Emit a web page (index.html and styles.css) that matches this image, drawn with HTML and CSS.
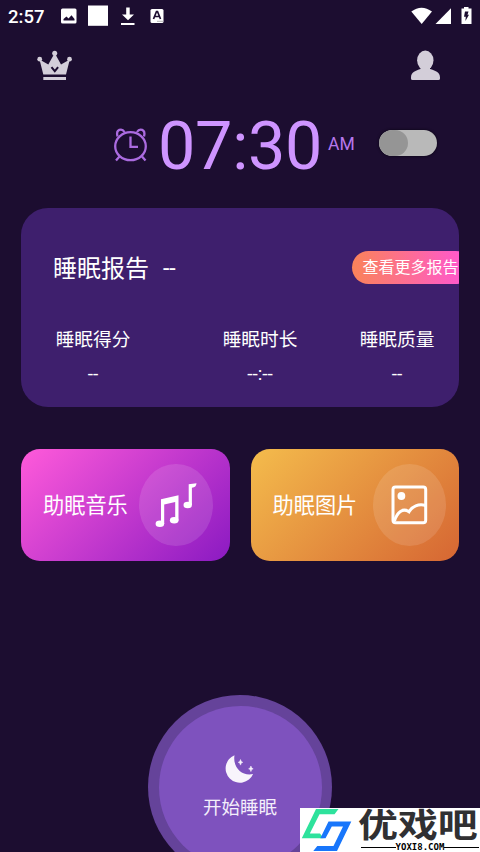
FILE: index.html
```html
<!DOCTYPE html>
<html lang="zh-CN">
<head>
<meta charset="utf-8">
<title>睡眠</title>
<link rel="stylesheet" href="styles.css">
</head>
<body>
<div class="screen">
  <header class="status">
    <span class="status-time">2:57</span>
    <svg class="status-left" viewBox="60 4 106 24" width="106" height="24">
      <rect x="61" y="8.500" width="15.500" height="15" rx="1.500" fill="#fff"/>
      <path d="M63.500 20.500v-1.500l3-2.500 2 2 3-3.200 3 3.700v1.500z" fill="#1c0d30"/>
      <rect x="88" y="5.500" width="20" height="20.300" fill="#fff"/>
      <path d="M126.200 7.500h3.500v7h4.300l-6 5.800-6-5.800h4.200zM121 23h13.500v2H121z" fill="#fff"/>
      <rect x="150.500" y="9" width="13" height="14" rx="1.500" fill="#fff"/>
      <path d="M153.500 19l3-7.500h1l3 7.500M155 16.500h4" fill="none" stroke="#1c0d30" stroke-width="1.700"/>
      <path d="M157.500 21.300h5" stroke="#666" stroke-width="1" stroke-dasharray="1 1"/>
    </svg>
    <svg class="status-right" viewBox="410 4 64 24" width="64" height="24">
      <path d="M411.300 11.500Q421.500 3.800 432 11.500L421.700 24z" fill="#fff"/>
      <path d="M451 8.300V24h-15.500z" fill="#fff"/>
      <path d="M464 7h4.500v1.500h3V24h-10V8.500h2.500z" fill="#fff"/>
      <path d="M465 11.500h3.500l-1 3.300h1.500l-3.600 6.200.4-4.300h-1.800z" fill="#1c0d30"/>
    </svg>
  </header>

  <nav class="topbar">
    <svg viewBox="37 50 36 31" width="36" height="31">
      <path d="M43.300 74.500L39.500 59.500 48.300 64.500 54.700 53 61 64.500 69.800 59.500 66 74.500z" fill="#d3ced9"/>
      <g fill="#d3ced9"><circle cx="39.700" cy="59.200" r="2.400"/><circle cx="54.700" cy="53.200" r="2.500"/><circle cx="69.500" cy="59.200" r="2.400"/><path d="M43.300 77h22.700v3H43.300z"/></g>
      <path d="M51.500 67.200l3.300 4 3.300-4" fill="none" stroke="#1c0d30" stroke-width="2"/>
    </svg>
    <svg viewBox="410 50 31 31" width="31" height="31">
      <ellipse cx="425.300" cy="60.300" rx="8.200" ry="9.700" fill="#d3ced9"/>
      <path d="M420.500 66h9.500v3c5 1.500 10 3 10 8.500v1q0 1.500-1.500 1.500h-26q-1.500 0-1.500-1.500v-1c0-5.500 5-7 9.500-8.500z" fill="#d3ced9"/>
    </svg>
  </nav>

  <section class="alarm">
    <svg class="alarm-icon" viewBox="113 127 35 36" width="35" height="36" fill="none" stroke="#ab6be0" stroke-width="2.300">
      <ellipse cx="130.500" cy="146.200" rx="15.300" ry="14"/>
      <path d="M117.500 136.500C115.500 129 122 128 124.500 132M137 132C139.500 128 146 129 144 136.500M119.500 156.500l-3.500 4M142 156.500l3.500 4M130.500 136.500v10.300h7.500"/>
    </svg>
    <span class="alarm-time">07:30</span>
    <span class="alarm-half">AM</span>
    <span class="toggle"><span class="knob"></span></span>
  </section>

  <section class="report">
    <div class="report-head">
      <h1>睡眠报告</h1><span class="report-value">--</span>
      <a class="more">查看更多报告</a>
    </div>
    <div class="stats">
      <div class="stat"><span>睡眠得分</span><b>--</b></div>
      <div class="stat"><span>睡眠时长</span><b>--:--</b></div>
      <div class="stat"><span>睡眠质量</span><b>--</b></div>
    </div>
  </section>

  <section class="tiles">
    <div class="tile music">
      <span>助眠音乐</span>
      <div class="disc">
        <svg viewBox="154 481 44 48" width="44" height="48" fill="#fff">
          <path d="M161 499.200L178.500 495.300V520.500H175.200V502L164.200 504.500V524H161z"/>
          <ellipse cx="159.900" cy="523.800" rx="4.300" ry="3.200"/><ellipse cx="174.200" cy="520.200" rx="4.300" ry="3.200"/>
          <path d="M188.700 484.200L196.500 483.200C196.300 486 195 487.400 191.900 487.700V505H188.700z"/>
          <ellipse cx="187.700" cy="505" rx="4.200" ry="3.200"/>
        </svg>
      </div>
    </div>
    <div class="tile picture">
      <span>助眠图片</span>
      <div class="disc">
        <svg viewBox="390 484 39 42" width="39" height="42" fill="none" stroke="#fff" stroke-width="3">
          <rect x="393" y="487" width="32.700" height="35.700" rx="2.500"/>
          <circle cx="401.400" cy="496" r="3.900" fill="#fff" stroke="none"/>
          <path d="M394.500 521C397 512 403 507.500 409 511.800C412 506.500 418.500 503.500 425.500 505.500"/>
        </svg>
      </div>
    </div>
  </section>

  <section class="start">
    <div class="start-inner">
      <svg viewBox="225.500 754 31 31" width="31" height="31" fill="#f8f4fc">
        <path d="M235 755.200A14.300 14.300 0 1 0 253.600 774C242 776.500 233 767 235 755.200z"/>
        <path d="M241 759.500l.8 2 1.500.8-1.500.8-.8 2-.8-2-1.500-.8 1.500-.8zM251.400 766l.8 2 1.500.8-1.500.8-.8 2-.8-2-1.500-.8 1.500-.8z" stroke="#f8f4fc" stroke-width=".5"/>
      </svg>
      <span>开始睡眠</span>
    </div>
  </section>

  <aside class="brand">
    <svg viewBox="300 808 56 44" width="56" height="44">
      <path d="M338.500 809L334.500 814.200H319.500L309.800 833.500H320L323.500 838.300H301.800L316 809z" fill="#2ee29c"/>
      <path d="M320.300 838.300L328.500 821.500H351.300L337 851H313.300L317.300 846H333.500L343 826.500H331.800L325.500 838.300z" fill="#1876fb"/>
    </svg>
    <div class="brand-text">
      <div class="brand-name">优戏吧</div>
      <div class="brand-url"><span>YOXI8.COM</span></div>
    </div>
  </aside>
</div>
</body>
</html>
```
FILE: styles.css
```css
* { box-sizing: border-box; }
body { margin: 0; background: #1c0d30; }
svg { display: block; flex: none; }
.screen {
  position: relative;
  width: 480px;
  height: 852px;
  overflow: hidden;
  background: #1c0d30;
  color: #fff;
  font-family: Roboto, "Noto Sans CJK SC", sans-serif;
}
.status { display: flex; height: 32px; padding: 4px 6px 4px 8px; align-items: center; }
.status-time { width: 52px; padding-top: 1px; font-size: 18.500px; font-weight: 500; line-height: 24px; }
.status-right { margin-left: auto; }
.topbar { display: flex; justify-content: space-between; padding: 18px 39px 0 37px; }
.alarm { display: flex; height: 103px; padding: 22px 0 0 113px; }
.alarm-icon { margin-top: 24px; }
.alarm-time {
  width: 170px;
  margin-left: 10px;
  padding-top: 1px;
  color: #ce94ff;
  font-size: 66.500px;
  letter-spacing: -.3px;
  line-height: 84px;
  white-space: nowrap;
}
.alarm-half { width: 51px; margin-top: 29px; color: #b777ec; font-size: 17.500px; line-height: 24px; }
.toggle {
  width: 58px;
  height: 26px;
  margin-top: 27px;
  margin-left: -.5px;
  border-radius: 13px;
  background: #b9b9b9;
  box-shadow: 0 0 3px #080310;
  overflow: hidden;
}
.knob { display: block; width: 29px; height: 26px; border-radius: 13px; background: #959595; }
.report {
  height: 199px;
  margin: 24px 21px 0;
  padding-top: 43px;
  border-radius: 27px;
  background: #3e1f6d;
  overflow: hidden;
}
.report-head { display: flex; height: 33px; padding-left: 32px; align-items: center; }
h1 { margin: 0; padding-top: 3px; font-size: 24px; font-weight: 400; line-height: 33px; }
.report-value { margin-left: 14px; padding-top: 1px; font-size: 23px; }
.more {
  flex: none;
  width: 120px;
  height: 33px;
  margin-left: auto;
  margin-right: -13px;
  padding-left: 10.500px;
  border-radius: 17px;
  background: linear-gradient(90deg, #fa8359, #ff5ac8 88%);
  font-size: 16px;
  line-height: 34px;
  white-space: nowrap;
}
.stats { display: flex; justify-content: space-between; padding: 42px 24px 0 34px; }
.stat { display: flex; width: 76px; flex-direction: column; align-items: center; font-size: 18.700px; line-height: 28px; white-space: nowrap; }
.stat:nth-child(2) { margin-left: 30px; }
.stat b { margin-top: 6px; font-weight: 400; font-size: 19px; line-height: 28px; }
.tiles { display: flex; justify-content: space-between; margin: 42px 21px 0; }
.tile { display: flex; width: 208.500px; height: 112px; padding: 0 17px 0 22px; justify-content: space-between; align-items: center; border-radius: 19px; font-size: 21.200px; }
.tile > span { padding-bottom: 3px; }
.tile.picture { padding-right: 13px; }
.music { background: linear-gradient(135deg, #ff5ada, #8b1ac2); }
.picture { background: linear-gradient(135deg, #f4bc4c, #d66633); }
.disc { display: flex; width: 73.500px; height: 82px; align-items: center; justify-content: center; border-radius: 50%; background: rgba(255,255,255,.12); }
.start { display: flex; width: 184px; height: 184px; margin: 134px auto 0; padding: 10.500px; border-radius: 50%; background: #65439a; }
.start-inner { display: flex; width: 163px; height: 163px; padding-top: 48px; flex-direction: column; align-items: center; border-radius: 50%; background: #7e52be; }
.start-inner span { margin-top: 9px; color: #f4eefb; font-size: 18.500px; line-height: 28px; }
.brand { position: absolute; right: 0; bottom: 0; display: flex; width: 180px; height: 44px; background: #fff; color: #303032; }
.brand-text { width: 122px; margin-left: 2px; }
.brand-name { height: 35px; transform: scaleX(1.210); transform-origin: left; font: 700 33px/31px "Noto Sans CJK SC", sans-serif; white-space: nowrap; }
.brand-url { display: flex; height: 9px; margin: 0 1px 0 3px; align-items: center; color: #000; font: bold 9px/9px "DejaVu Sans Mono", monospace; }
.brand-url::before, .brand-url::after { content: ""; flex: 1; height: 1px; background: #000; }
```
